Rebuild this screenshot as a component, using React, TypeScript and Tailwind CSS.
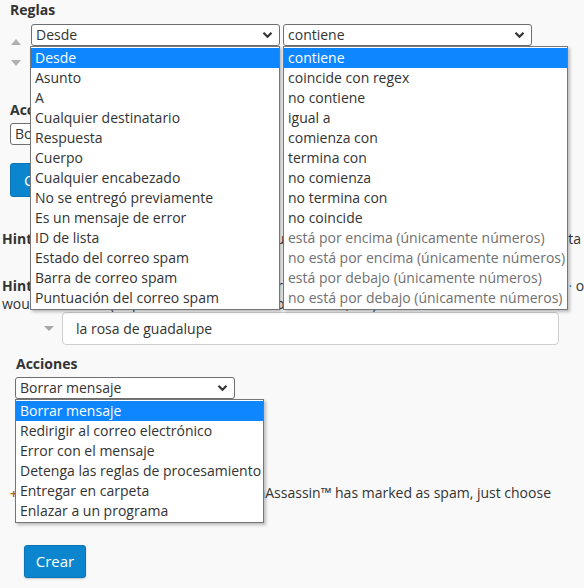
import React from "react";

// Filter editor with the three native select menus open

const rules = [
  "Desde",
  "Asunto",
  "A",
  "Cualquier destinatario",
  "Respuesta",
  "Cuerpo",
  "Cualquier encabezado",
  "No se entregó previamente",
  "Es un mensaje de error",
  "ID de lista",
  "Estado del correo spam",
  "Barra de correo spam",
  "Puntuación del correo spam",
];

const matches = [
  "contiene",
  "coincide con regex",
  "no contiene",
  "igual a",
  "comienza con",
  "termina con",
  "no comienza",
  "no termina con",
  "no coincide",
  "está por encima (únicamente números)",
  "no está por encima (únicamente números)",
  "está por debajo (únicamente números)",
  "no está por debajo (únicamente números)",
];

const actions = [
  "Borrar mensaje",
  "Redirigir al correo electrónico",
  "Error con el mensaje",
  "Detenga las reglas de procesamiento",
  "Entregar en carpeta",
  "Enlazar a un programa",
];

function Chevron() {
  return (
    <svg width="11" height="8" viewBox="0 0 11 8" className="shrink-0">
      <path d="M1.5 1.8 L5.5 5.8 L9.5 1.8" fill="none" stroke="#333" strokeWidth="2.2" />
    </svg>
  );
}

function Menu({ items, grayFrom = 99 }: { items: string[]; grayFrom?: number }) {
  return (
    <div className="bg-white border border-[#767676] shadow-[2px_2px_3px_rgba(0,0,0,0.25)] py-px">
      {items.map((item, i) => (
        <div
          key={item}
          className={`h-[20px] leading-[20px] pl-[4px] pr-[4px] whitespace-nowrap ${
            i === 0 ? "bg-[#0d86ff] text-white" : i >= grayFrom ? "text-[#707070]" : "text-[#333]"
          }`}
        >
          {item}
        </div>
      ))}
    </div>
  );
}

function Select({ value, className }: { value: string; className: string }) {
  return (
    <div
      className={`h-[22px] border border-[#6f6f6f] rounded-[3px] bg-white flex items-center justify-between pl-[4px] pr-[6px] ${className}`}
    >
      <span className="leading-[20px]">{value}</span>
      <Chevron />
    </div>
  );
}

export default function App() {
  return (
    <div className="relative w-[584px] h-[588px] overflow-hidden bg-[#f9f9f9] text-[14px] text-[#333] font-['Open_Sans',sans-serif]">
      <div className="pl-[10px] h-[20px] leading-[20px] font-bold">Reglas</div>

      {/* rule row */}
      <div className="mt-[4px] flex items-start h-[42px]">
        <div className="w-[31px] flex flex-col items-center pt-[15px]">
          <div className="w-0 h-0 border-x-[5px] border-x-transparent border-b-[6px] border-b-[#b0b0b0]" />
          <div className="mt-[15px] w-0 h-0 border-x-[5px] border-x-transparent border-t-[6px] border-t-[#b0b0b0]" />
        </div>
        <div className="relative z-10">
          <Select value="Desde" className="w-[249px]" />
          <div className="absolute left-[-1px] top-[22px] w-[250px]">
            <Menu items={rules} />
          </div>
        </div>
        <div className="relative z-10 ml-[3px]">
          <Select value="contiene" className="w-[249px]" />
          <div className="absolute left-0 top-[22px] w-[285px]">
            <Menu items={matches} grayFrom={9} />
          </div>
        </div>
      </div>

      {/* content behind the open menus */}
      <div className="mt-[34px] pl-[10px] h-[20px] leading-[20px] font-bold">Acciones</div>
      <div className="mt-[3px] ml-[10px] w-[230px] h-[22px] border border-[#6f6f6f] rounded-[3px] bg-white pl-[4px] leading-[20px]">
        Borrar mensaje
      </div>
      <div className="mt-[18px] pl-[10px]">
        <button className="h-[34px] px-[13px] rounded-[3px] bg-[#0b85cd] border border-[#0a74b5] text-white text-[15px]">
          Crear
        </button>
      </div>

      <div className="mt-[33px] pl-[2px] flex leading-[18px] whitespace-nowrap">
        <b>Hint:</b>
        <div className="flex-1 flex justify-end overflow-hidden pr-[3px]">
          <span className="shrink-0">
            to match a regular expression, select “coincide con regex” and enter your pattern; for example, “^Hola” matches the subject at the start, or “hola$” at the end of la ta
          </span>
        </div>
      </div>

      <div className="mt-[29px] pl-[2px] flex leading-[18px] whitespace-nowrap">
        <b>Hint:</b>
        <div className="flex-1 flex justify-end overflow-hidden mr-[-6px]">
          <span className="shrink-0">
            The “Spam Bar” is a row of “+” characters; to match a score of 3 or higher, use “+++” <span className="text-[#2a8fd0]">·</span> or
          </span>
        </div>
      </div>
      <div className="pl-[2px] leading-[18px] whitespace-nowrap">
        would use “+++” (a spam score of 5 would be “+++++”, etc).
      </div>

      {/* value input */}
      <div className="mt-[-1px] flex items-center pl-[44px]">
        <div className="w-0 h-0 border-x-[5px] border-x-transparent border-t-[5px] border-t-[#a8a8a8]" />
        <div className="ml-[8px] w-[497px] h-[33px] bg-white border border-[#cfcfcf] rounded-[4px] pl-[13px] flex items-center">
          la rosa de guadalupe
        </div>
      </div>

      <div className="mt-[9px] pl-[16px] h-[20px] leading-[20px] font-bold">Acciones</div>
      <div className="mt-[3px] ml-[15px] relative z-10 w-fit">
        <Select value="Borrar mensaje" className="w-[220px] h-[21px]" />
        <div className="absolute left-0 top-[22px] w-[249px]">
          <Menu items={actions} />
        </div>
      </div>

      <div className="mt-[84px] flex items-center h-[20px] leading-[20px] whitespace-nowrap">
        <span className="ml-[10px] w-[8px] text-[#b5651d] text-[13px] font-bold">+</span>
        <div className="flex-1 flex justify-end overflow-hidden pr-[33px]">
          <span className="shrink-0">
            If you want to discard every message that SpamAssassin™ has marked as spam, just choose
          </span>
        </div>
      </div>

      <div className="mt-[42px] pl-[24px]">
        <button className="h-[33px] w-[62px] rounded-[3px] bg-[#0b85cd] border border-[#0a74b5] text-white text-[15px] shadow-[0_1px_2px_rgba(0,0,0,0.2)]">
          Crear
        </button>
      </div>
    </div>
  );
}
